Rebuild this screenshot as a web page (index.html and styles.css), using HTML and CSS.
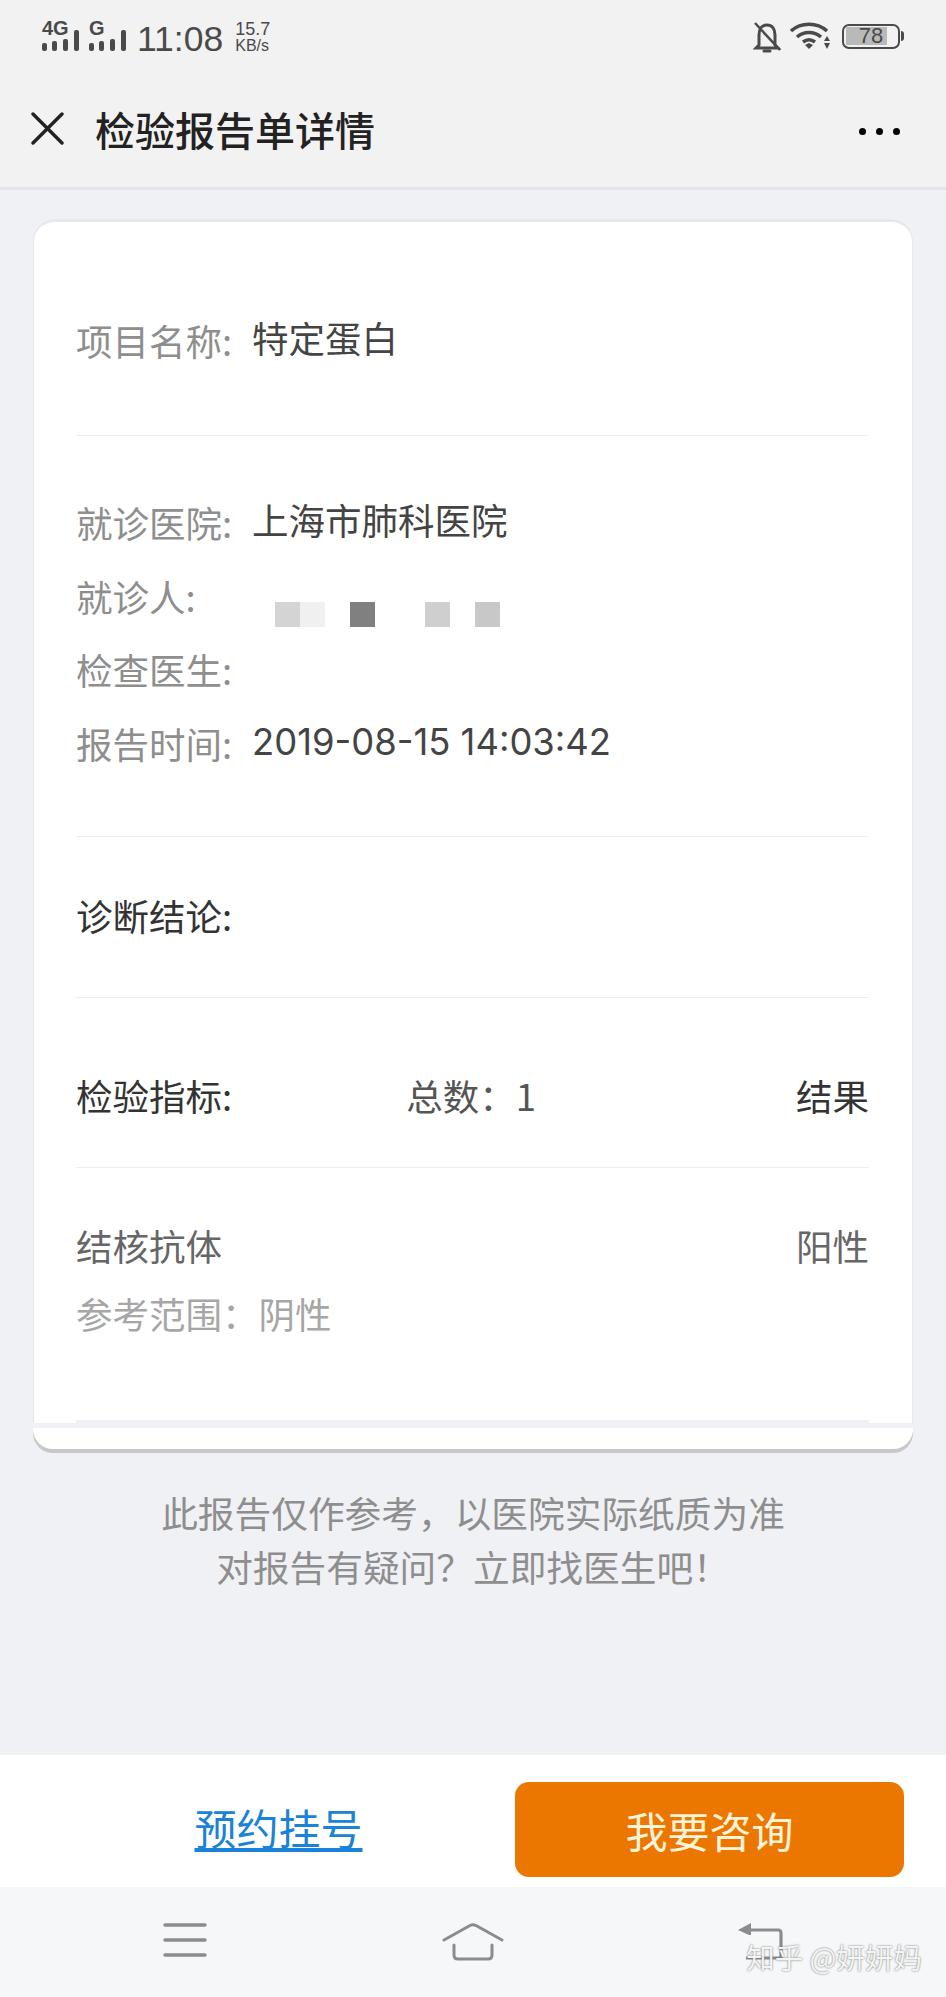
FILE: index.html
```html
<!DOCTYPE html>
<html lang="zh-CN">
<head>
  <meta charset="UTF-8">
  <title>检验报告单详情</title>
  <link rel="stylesheet" href="styles.css">
</head>
<body>

  <!-- 状态栏 -->
  <div class="statusbar">
    <div class="status-left">
      <div class="signal">
        <span class="net">4G</span>
        <svg width="37" height="21" viewBox="0 0 37 21"><g fill="#4a4a4a"><rect x="0" y="13" width="5" height="8" rx="2"/><rect x="10" y="11" width="5" height="10" rx="2"/><rect x="21" y="9" width="5" height="12" rx="2"/><rect x="32" y="0" width="5" height="21" rx="2"/></g></svg>
      </div>
      <div class="signal signal-g">
        <span class="net">G</span>
        <svg width="37" height="21" viewBox="0 0 37 21"><g fill="#4a4a4a"><rect x="0" y="13" width="5" height="8" rx="2"/><rect x="10" y="11" width="5" height="10" rx="2"/><rect x="21" y="9" width="5" height="12" rx="2"/><rect x="32" y="0" width="5" height="21" rx="2"/></g></svg>
      </div>
      <span class="clock">11:08</span>
      <div class="speed"><span>15.7</span><span class="unit">KB/s</span></div>
    </div>
    <div class="status-right">
      <svg width="28" height="32" viewBox="0 0 28 32" fill="none" stroke="#4a4a4a" stroke-width="3">
        <path d="M6 23V13c0-6 3-10 8-10s8 4 8 10v10l3 3H3z"/>
        <path d="M11 29h6" stroke-linecap="round"/>
        <path d="M2 1l25 27" stroke-width="2.5"/>
      </svg>
      <svg width="41" height="28" viewBox="0 0 41 28" fill="none" stroke="#4a4a4a" stroke-width="3.5">
        <path d="M1 9c10-9 26-9 36 0"/>
        <path d="M7 15c7-6 17-6 24 0"/>
        <path d="M13 20c4-3 8-3 12 0"/>
        <path d="M15 23l4-2 4 2-4 4z" fill="#4a4a4a" stroke="none"/>
        <path d="M37 14l3 5h-6zM34 21h6l-3 6z" fill="#4a4a4a" stroke="none"/>
      </svg>
      <div class="battery"><div class="battery-fill">78</div></div>
    </div>
  </div>

  <!-- 标题栏 -->
  <div class="header">
    <svg class="close" width="33" height="33" viewBox="0 0 33 33" stroke="#222" stroke-width="3.4" stroke-linecap="round">
      <path d="M2 2l29 29M31 2L2 31"/>
    </svg>
    <span class="title">检验报告单详情</span>
    <div class="more"><i></i><i></i><i></i></div>
  </div>

  <div class="content">
    <div class="card">
      <div class="section section-name">
        <div class="field"><span class="key">项目名称:</span><span class="val">特定蛋白</span></div>
      </div>

      <div class="section section-info">
        <div class="field"><span class="key">就诊医院:</span><span class="val">上海市肺科医院</span></div>
        <div class="field">
          <span class="key">就诊人:</span>
          <div class="mosaic"><i class="m1"></i><i class="m2"></i><i class="m0"></i><i class="m3"></i><i class="m0"></i><i class="m0"></i><i class="m4"></i><i class="m0"></i><i class="m5"></i></div>
        </div>
        <div class="field"><span class="key">检查医生:</span></div>
        <div class="field"><span class="key">报告时间:</span><span class="val num">2019-08-15 14:03:42</span></div>
      </div>

      <div class="section section-diag">
        <span class="dark">诊断结论:</span>
      </div>

      <div class="section section-head">
        <span class="dark">检验指标:</span>
        <span class="total">总数：1</span>
        <span class="dark">结果</span>
      </div>

      <div class="section-result">
        <div class="result-row"><span>结核抗体</span><span>阳性</span></div>
        <div class="result-ref">参考范围：阴性</div>
      </div>
      <div class="result-line"></div>
    </div>
    <div class="card-foot"></div>

    <p class="notice">此报告仅作参考，以医院实际纸质为准<br>对报告有疑问？立即找医生吧！</p>
  </div>

  <div class="actions">
    <a class="book" href="#">预约挂号</a>
    <div class="consult">我要咨询</div>
  </div>

  <!-- 导航栏 -->
  <div class="navbar">
    <svg width="44" height="34" viewBox="0 0 44 34" fill="none" stroke="#8c8c8c" stroke-width="3.4" stroke-linecap="round">
      <path d="M2 2h40M2 17h40M2 32h40"/>
    </svg>
    <svg width="62" height="38" viewBox="0 0 62 38" fill="none" stroke="#8c8c8c" stroke-width="3" stroke-linecap="round" stroke-linejoin="round">
      <path d="M2 17L28 2.500q3-1.500 6 0L60 17"/>
      <path d="M12 22v10q0 4 4 4h30q4 0 4-4V22"/>
    </svg>
    <svg width="45" height="38" viewBox="0 0 45 38" fill="none">
      <path d="M0 7L13 0v12h-2z" fill="#8c8c8c"/>
      <path d="M11 7h29q3 0 3 3v25H8" stroke="#8c8c8c" stroke-width="3.200"/>
    </svg>
  </div>

  <div class="watermark">知乎 @妍妍妈</div>

</body>
</html>
```

FILE: styles.css
```css
* {
  box-sizing: border-box;
}

body {
  margin: 0;
  width: 946px;
  height: 1997px;
  position: relative;
  overflow: hidden;
  background-color: #f0f1f5;
  font-family: "Noto Sans CJK SC", "Noto Sans", sans-serif;
}

.statusbar {
  height: 68px;
  padding: 18px 46px 0 42px;
  background: #f2f2f2;
  display: flex;
  justify-content: space-between;
  align-items: flex-start;
  color: #4a4a4a;
}

.status-left {
  display: flex;
  align-items: flex-start;
}

.signal {
  width: 37px;
  height: 33px;
  display: flex;
  flex-direction: column;
  font-family: "Liberation Sans", sans-serif;
}

.signal svg {
  flex: none;
  margin-top: -8px;
}

.signal-g {
  margin-left: 10px;
}

.net {
  font-size: 20px;
  line-height: 20px;
  font-weight: bold;
}

.clock {
  margin-left: 11px;
  margin-top: 1px;
  font-family: "Liberation Sans", sans-serif;
  font-size: 35.5px;
  line-height: 40px;
}

.speed {
  margin-left: 12px;
  margin-top: 2px;
  display: flex;
  flex-direction: column;
  font-family: "Liberation Sans", sans-serif;
  font-size: 18px;
  line-height: 18px;
}

.speed .unit {
  font-size: 16px;
  line-height: 16px;
}

.status-right {
  display: flex;
  align-items: flex-start;
  padding-top: 4px;
  gap: 9px;
}

.battery {
  width: 58px;
  height: 25px;
  margin-top: 2px;
  margin-left: 2px;
  padding: 0.5px 1.5px;
  border: 2.5px solid #4a4a4a;
  border-radius: 7px;
  position: relative;
}

.battery::after {
  content: "";
  position: absolute;
  right: -6px;
  top: 5px;
  width: 3px;
  height: 10px;
  background: #4a4a4a;
  border-radius: 0 3px 3px 0;
}

.battery-fill {
  width: 41px;
  height: 18px;
  background: #b9b9b9;
  font-family: "Liberation Sans", sans-serif;
  font-size: 22px;
  line-height: 18px;
  text-align: center;
  padding-left: 10px;
}

.header {
  height: 122px;
  padding: 2px 46px 0 31px;
  background: #f2f2f2;
  border-bottom: 3px solid #e4e4ea;
  display: flex;
  align-items: center;
}

.title {
  margin-left: 31px;
  font-size: 40px;
  font-weight: 500;
  color: #222;
}

.more {
  margin-left: auto;
  margin-top: 6px;
  display: flex;
  gap: 10px;
}

.more i {
  width: 7px;
  height: 7px;
  border-radius: 50%;
  background: #000;
}

.content {
  height: 1565px;
  padding: 29px 33px 0;
}

.card {
  height: 1204px;
  padding: 0 43px 0 42px;
  background: #fff;
  border: 1px solid #e8e8ec;
  border-top-width: 3px;
  border-bottom: 0;
  border-radius: 22px 22px 0 0;
}

.card-foot {
  height: 21px;
  margin-top: 5px;
  background: #fffffd;
  border-radius: 0 0 20px 20px;
  box-shadow: 0 4px 0 #c8c8c8;
}

.section {
  border-bottom: 1px solid #eeeeee;
}

.section-name {
  height: 214px;
  padding-top: 94px;
}

.section-info {
  height: 401px;
  padding-top: 62px;
}

.field {
  height: 73.5px;
  display: flex;
  align-items: flex-start;
}

.key {
  width: 176px;
  flex: none;
  font-size: 36.500px;
  line-height: 50px;
  color: #8e8e8e;
}

.val {
  font-size: 36.500px;
  line-height: 44px;
  color: #444;
}

.num {
  font-family: "Inter", "Noto Sans CJK SC", sans-serif;
  font-size: 36.400px;
  padding-top: 1px;
}

.mosaic {
  margin-top: 30px;
  margin-left: 23px;
  display: flex;
}

.mosaic i {
  width: 25px;
  height: 25px;
}

.m0 { background: #fff; }
.m1 { background: #d4d4d4; }
.m2 { background: #f0f0f0; }
.m3 { background: #808080; }
.m4 { background: #cfcfcf; }
.m5 { background: #c8c8c8; }

.dark {
  font-size: 36.500px;
  color: #333;
}

.section-diag {
  height: 161px;
  padding-top: 52px;
}

.section-head {
  height: 170px;
  padding-top: 71px;
  display: flex;
  justify-content: space-between;
}

.total {
  font-size: 36.500px;
  color: #555;
  margin-left: -86px;
}

.section-result {
  padding-top: 51px;
}

.result-row {
  display: flex;
  justify-content: space-between;
  font-size: 36.500px;
  color: #666;
}

.result-ref {
  margin-top: 15px;
  font-size: 36.500px;
  color: #a6a6a6;
}

.result-line {
  height: 3px;
  margin-top: 80px;
  background: #f0f1f5;
}

.notice {
  margin: 36px 0 0;
  font-size: 36.700px;
  line-height: 54px;
  text-align: center;
  color: #8e8e8e;
}

.actions {
  height: 132px;
  position: absolute;
  left: 0;
  right: 0;
  top: 1755px;
  padding: 27px 42px 10px 42px;
  background: #fff;
  display: flex;
  align-items: stretch;
}

.book {
  flex: 1;
  padding-top: 14px;
  text-align: center;
  font-size: 42px;
  color: #1a82d8;
}

.consult {
  width: 389px;
  background: #ec7700;
  border-radius: 14px;
  color: #fff3d8;
  font-size: 42px;
  line-height: 95px;
  text-align: center;
}

.navbar {
  position: absolute;
  left: 0;
  right: 0;
  top: 1887px;
  height: 110px;
  padding: 36px 163px 0;
  background: #f6f7f8;
  display: flex;
  justify-content: space-between;
  align-items: flex-start;
}

.watermark {
  position: absolute;
  right: 24px;
  top: 1936px;
  font-size: 28.500px;
  color: #f4f4f4;
  text-shadow: 0 0 2px #666;
}
```
